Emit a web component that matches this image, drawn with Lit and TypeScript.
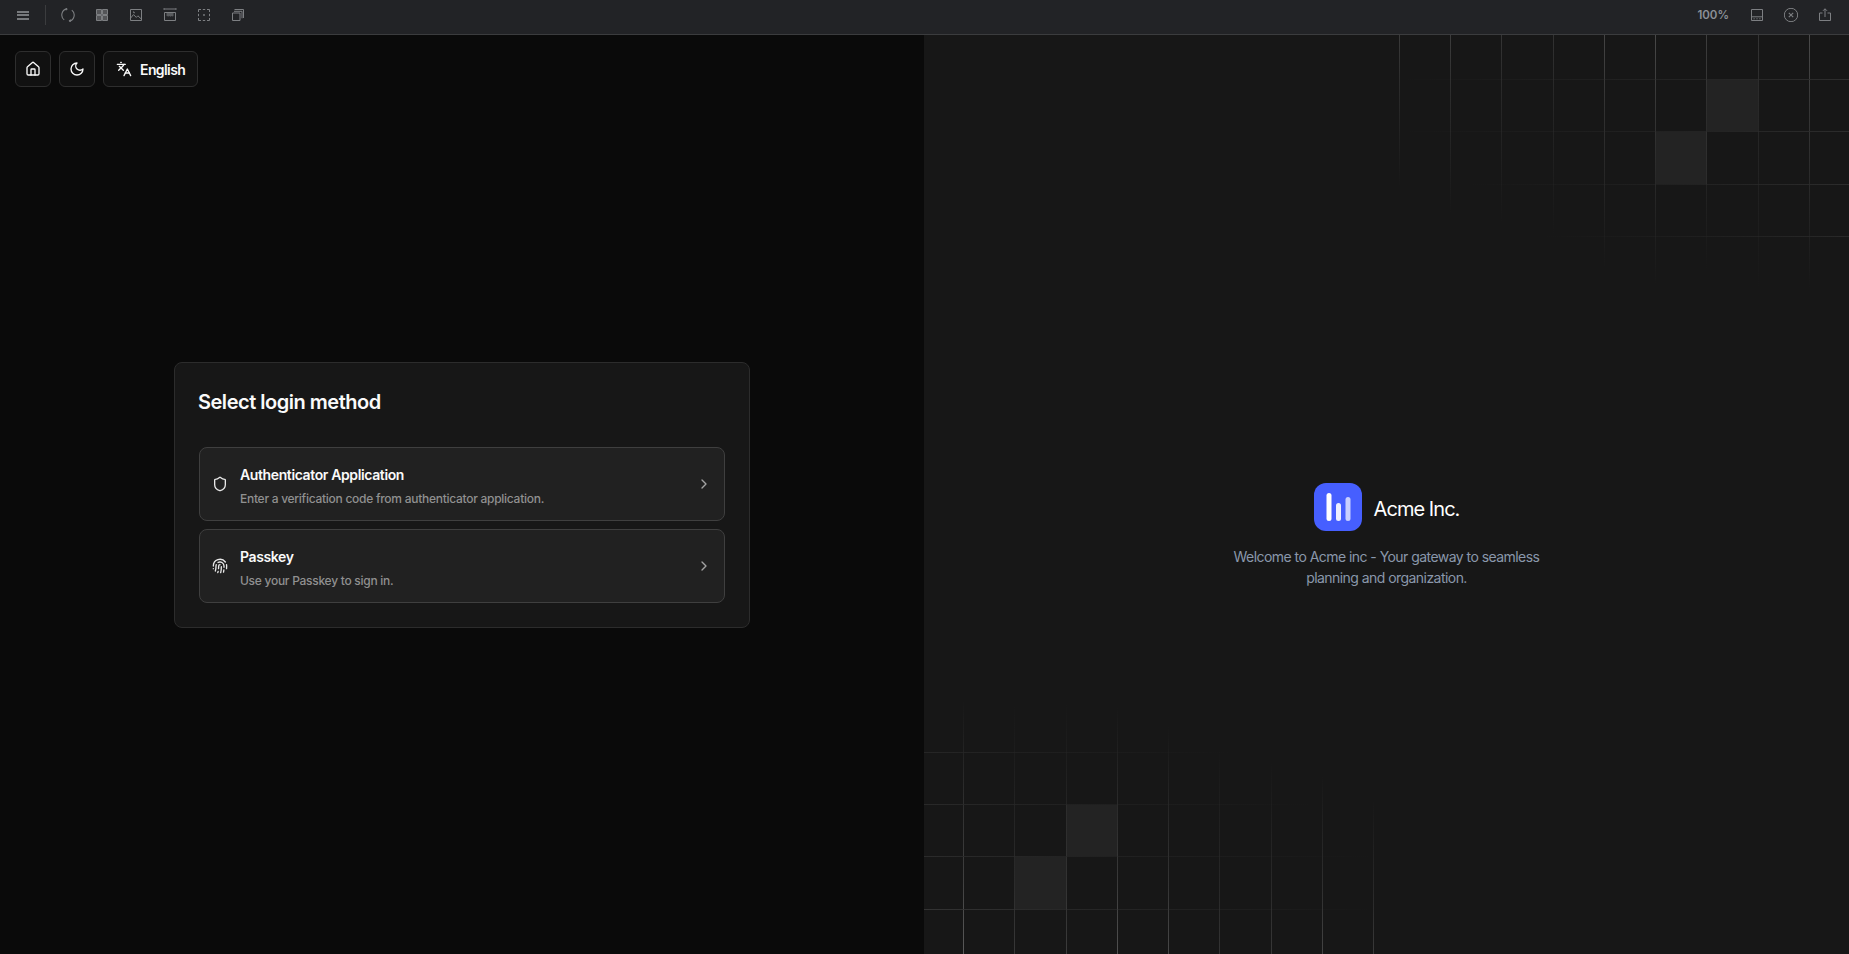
import { LitElement, html, css, svg } from "lit";
import { customElement } from "lit/decorators.js";

const lucide = (paths: string[], size = 16, sw = 2) => html`<svg
  width=${size}
  height=${size}
  viewBox="0 0 24 24"
  fill="none"
  stroke="currentColor"
  stroke-width=${sw}
  stroke-linecap="round"
  stroke-linejoin="round"
>
  ${paths.map((d) => svg`<path d=${d}></path>`)}
</svg>`;

const HOUSE = [
  "M15 21v-8a1 1 0 0 0-1-1h-4a1 1 0 0 0-1 1v8",
  "M3 10a2 2 0 0 1 .709-1.528l7-5.999a2 2 0 0 1 2.582 0l7 5.999A2 2 0 0 1 21 10v9a2 2 0 0 1-2 2H5a2 2 0 0 1-2-2z",
];
const MOON = ["M12 3a6 6 0 0 0 9 9 9 9 0 1 1-9-9Z"];
const LANG = ["m5 8 6 6", "m4 14 6-6 2-3", "M2 5h12", "M7 2h1", "m22 22-5-10-5 10", "M14 18h6"];
const SHIELD = [
  "M20 13c0 5-3.5 7.5-7.66 8.95a1 1 0 0 1-.67-.01C7.5 20.5 4 18 4 13V6a1 1 0 0 1 1-1c2 0 4.5-1.2 6.24-2.72a1.17 1.17 0 0 1 1.52 0C14.51 3.81 17 5 19 5a1 1 0 0 1 1 1z",
];
const PRINT = [
  "M12 10a2 2 0 0 0-2 2c0 1.02-.1 2.51-.26 4",
  "M14 13.12c0 2.38 0 6.38-1 8.88",
  "M17.29 21.02c.12-.6.43-2.3.5-3.02",
  "M2 12a10 10 0 0 1 18-6",
  "M2 16h.01",
  "M21.8 16c.2-2 .131-5.354 0-6",
  "M5 19.5C5.5 18 6 15 6 12a6 6 0 0 1 .34-2",
  "M8.65 22c.21-.66.45-1.32.57-2",
  "M9 6.8a6 6 0 0 1 9 5.2v2",
];
const CHEV = ["m9 18 6-6-6-6"];

const tool = (body: unknown) =>
  html`<svg class="ti" width="14" height="14" viewBox="0 0 14 14" fill="none" stroke="currentColor" stroke-width="1">${body}</svg>`;

const TOOLS_LEFT = [
  svg`<path d="M6 .9A6.2 6.2 0 0 0 3.2 11.9" stroke-width="1.1"/><path d="M8 13.1A6.2 6.2 0 0 0 10.8 2.1" stroke-width="1.1"/><path d="M4.6 .2L6.2 .9 5.2 2.4" stroke-width=".9"/><path d="M9.6 11L7.6 13l2.4 1z" fill="currentColor" stroke="none"/>`,
  svg`<path d="M1.5 1.5h5v5h-5zM7.5 1.5h5v5h-5zM1.5 7.5h5v5h-5zM7.5 7.5h5v5h-5z" fill="currentColor" fill-opacity=".55"/>`,
  svg`<path d="M1.5 1.5h11v11h-11z"/><path d="M1.5 10.2l3-3.6 2.8 2.8 1.6-1.6 3.6 3.4"/><path d="M4.2 3.6l1.4 1.6" stroke-width="1.2"/>`,
  svg`<path d="M1 1h12"/><path d="M1 .2v1.6M13 .2v1.6"/><path d="M1.5 4.5h11v8h-11z"/><path d="M3.5 5h7v3l-1 .6-1-.6-1 .8-1-.8-1 .6-2-.6z" fill="currentColor" fill-opacity=".6" stroke="none"/>`,
  svg`<path d="M1.5 4V1.5H4M5.8 1.5h2.4M10 1.5h2.5V4M12.5 5.8v2.4M12.5 10v2.5H10M8.2 12.5H5.8M4 12.5H1.5V10M1.5 8.2V5.8"/><circle cx="7" cy="7" r=".9" fill="currentColor" stroke="none"/>`,
  svg`<path d="M1.5 5h7.5v7.5H1.5z"/><path d="M3 3.3h8v7"/><path d="M3.5 1.5h9V10"/>`,
];

const TOOLS_RIGHT = [
  svg`<path d="M1.5 1.5h11v11h-11z"/><path d="M1.5 8.8h11"/><path d="M3.5 10.8h1.2M6.4 10.8h1.2M9.3 10.8h1.2"/>`,
  svg`<circle cx="7" cy="7" r="6.7"/><path d="M4.8 4.8l4.4 4.4M9.2 4.8l-4.4 4.4" stroke-width="1.1"/>`,
  svg`<path d="M4.5 5H1.5v7.5h11V5H9.5"/><path d="M7 9V.8"/><path d="M5 2.8L7 .8l2 2"/>`,
];

/* Grid decoration: x/y in page pixels, with the extent each line fades to. */
const OX = 924;
const OY = 35;
const TR_V: [number, number, string][] = [
  [1399.5, 187, "#3a3a3a"],
  [1450.5, 215, "#3c3c3c"],
  [1501.5, 222, "#343434"],
  [1553.5, 235, "#323232"],
  [1604.5, 270, "#444444"],
  [1655.5, 285, "#484848"],
  [1706.5, 270, "#3e3e3e"],
  [1758.5, 290, "#343434"],
  [1809.5, 288, "#4a4a4a"],
];
const TR_H: [number, number, string][] = [
  [79.5, 1399, "#2e2e2e"],
  [131.5, 1400, "#2c2c2c"],
  [184.5, 1470, "#2c2c2c"],
  [236.5, 1545, "#292929"],
];
const BL_V: [number, number, string][] = [
  [963.5, 700, "#5a5a5a"],
  [1014.5, 702, "#383838"],
  [1066.5, 702, "#3c3c3c"],
  [1117.5, 706, "#505050"],
  [1168.5, 725, "#484848"],
  [1219.5, 750, "#343434"],
  [1271.5, 762, "#383838"],
  [1322.5, 775, "#444444"],
  [1373.5, 800, "#3a3a3a"],
];
const BL_H: [number, number, string][] = [
  [752.5, 1230, "#262626"],
  [804.5, 1310, "#292929"],
  [856.5, 1373, "#2b2b2b"],
  [909.5, 1374, "#333333"],
];

@customElement("app-root")
export class AppRoot extends LitElement {
  static styles = css`
    :host {
      display: flex;
      flex-direction: column;
      width: 100%;
      height: 954px;
      overflow: hidden;
      font-family: Inter, "Liberation Sans", sans-serif;
      background: #0a0a0a;
      color: #fff;
    }
    .toolbar {
      flex: 0 0 35px;
      box-sizing: border-box;
      display: flex;
      align-items: center;
      justify-content: space-between;
      padding-bottom: 4px;
      background: #222326;
      border-bottom: 1px solid #3b3c3e;
      color: #7d7f82;
    }
    .tgroup {
      display: flex;
      align-items: center;
    }
    .tleft {
      padding-left: 17px;
    }
    .burger {
      width: 12px;
      height: 9px;
      margin-right: 16px;
      box-sizing: border-box;
      border-top: 2px solid #77797c;
      border-bottom: 2px solid #77797c;
      position: relative;
    }
    .burger::after {
      content: "";
      position: absolute;
      left: 0;
      right: 0;
      top: 1.5px;
      height: 2px;
      background: #77797c;
    }
    .sep {
      width: 1px;
      height: 20px;
      background: #3b3c3e;
      margin-right: 15px;
    }
    .tleft .ti {
      margin-right: 20px;
    }
    .tright {
      padding-right: 17px;
      gap: 20px;
    }
    .zoomval {
      font-size: 11.5px;
      font-weight: 600;
      color: #8b9097;
      margin-right: 1px;
    }
    .main {
      flex: 1;
      display: grid;
      grid-template-columns: 924px 1fr;
      min-height: 0;
    }
    .left {
      position: relative;
      display: flex;
      align-items: center;
      justify-content: center;
      background: #0a0a0a;
    }
    .topbtns {
      position: absolute;
      top: 16px;
      left: 15px;
      display: flex;
      gap: 8px;
    }
    .tb {
      box-sizing: border-box;
      height: 36px;
      min-width: 36px;
      display: flex;
      align-items: center;
      justify-content: center;
      gap: 8px;
      padding: 0 12px;
      background: #111111;
      border: 1px solid #2e2e2e;
      border-radius: 6px;
      font-size: 14px;
      font-weight: 600;
      letter-spacing: -0.6px;
      color: #fafafa;
    }
    .tb.icon {
      padding: 0;
    }
    .card {
      box-sizing: border-box;
      width: 576px;
      height: 266px;
      padding: 24px;
      background: #171717;
      border: 1px solid #2c2c2c;
      border-radius: 8px;
    }
    h1 {
      margin: 0 0 30px -1px;
      font-size: 20px;
      line-height: 30px;
      font-weight: 600;
      letter-spacing: -0.48px;
      color: #fafafa;
    }
    .methods {
      display: flex;
      flex-direction: column;
      gap: 8px;
    }
    .method {
      box-sizing: border-box;
      height: 74px;
      display: flex;
      align-items: center;
      gap: 12px;
      padding: 0 12px;
      background: #212121;
      border: 1px solid #3f3f3f;
      border-radius: 8px;
    }
    .mtext {
      flex: 1;
      display: flex;
      flex-direction: column;
      gap: 4px;
      padding-top: 6px;
    }
    .mtitle {
      font-size: 14px;
      line-height: 20px;
      font-weight: 600;
      letter-spacing: -0.38px;
      color: #fafafa;
    }
    .mdesc {
      font-size: 12px;
      line-height: 20px;
      font-weight: 500;
      letter-spacing: -0.27px;
      color: #909090;
    }
    .chev {
      color: #a3a3a3;
      display: flex;
    }
    .micon {
      color: #e8e8e8;
      display: flex;
    }
    .right {
      position: relative;
      display: flex;
      flex-direction: column;
      align-items: center;
      padding-top: 448px;
      background: #171717;
      overflow: hidden;
    }
    .grid {
      position: absolute;
      left: 0;
      top: 0;
      width: 100%;
      height: 100%;
      pointer-events: none;
    }
    .brand {
      display: flex;
      align-items: center;
      gap: 12px;
      position: relative;
      margin-bottom: 15px;
    }
    .logo {
      width: 48px;
      height: 48px;
      border-radius: 12px;
      background: #465fff;
      display: flex;
    }
    .bname {
      padding-top: 3px;
      font-size: 20px;
      font-weight: 400;
      letter-spacing: -0.95px;
      color: #fff;
    }
    .tag {
      position: relative;
      margin: 0;
      width: 320px;
      text-align: center;
      font-size: 14px;
      line-height: 21px;
      letter-spacing: -0.55px;
      color: #8a97ab;
    }
  `;

  /* One line with its own gradient from `c` at the start to transparent at the end. */
  private fade(id: string, x1: number, y1: number, x2: number, y2: number, c: string) {
    return svg`
      <linearGradient id=${id} gradientUnits="userSpaceOnUse" x1=${x1} y1=${y1} x2=${x2} y2=${y2}>
        <stop offset="0" stop-color=${c}/>
        <stop offset="0.3" stop-color=${c} stop-opacity=".6"/>
        <stop offset="1" stop-color=${c} stop-opacity="0"/>
      </linearGradient>
      <line x1=${x1} y1=${y1} x2=${x2} y2=${y2} stroke=${`url(#${id})`} stroke-width="1"/>
    `;
  }

  private gridSvg() {
    const W = 925;
    const H = 919;
    return svg`
      <rect x=${1707 - OX} y=${80 - OY} width="51" height="51" fill="#232323"/>
      <rect x=${1656 - OX} y=${132 - OY} width="51" height="52" fill="#232323"/>
      <rect x=${1066 - OX} y=${805 - OY} width="51" height="51" fill="#232323"/>
      <rect x=${1015 - OX} y=${857 - OY} width="52" height="52" fill="#232323"/>
      ${TR_V.map(([x, end, c], i) => this.fade(`trv${i}`, x - OX, 0, x - OX, end - OY, c))}
      ${TR_H.map(([y, start, c], i) => this.fade(`trh${i}`, W, y - OY, start - OX, y - OY, c))}
      ${BL_V.map(([x, start, c], i) => this.fade(`blv${i}`, x - OX, H, x - OX, start - OY, c))}
      ${BL_H.map(([y, end, c], i) => this.fade(`blh${i}`, 0, y - OY, end - OX, y - OY, c))}
    `;
  }

  render() {
    return html`
      <div class="toolbar">
        <div class="tgroup tleft">
          <div class="burger"></div>
          <div class="sep"></div>
          ${TOOLS_LEFT.map((t) => tool(t))}
        </div>
        <div class="tgroup tright">
          <span class="zoomval">100%</span>
          ${TOOLS_RIGHT.map((t) => tool(t))}
        </div>
      </div>
      <div class="main">
        <div class="left">
          <div class="topbtns">
            <div class="tb icon">${lucide(HOUSE)}</div>
            <div class="tb icon">${lucide(MOON)}</div>
            <div class="tb">${lucide(LANG)}<span>English</span></div>
          </div>
          <div class="card">
            <h1>Select login method</h1>
            <div class="methods">
              <div class="method">
                <span class="micon">${lucide(SHIELD)}</span>
                <div class="mtext">
                  <span class="mtitle">Authenticator Application</span>
                  <span class="mdesc">Enter a verification code from authenticator application.</span>
                </div>
                <span class="chev">${lucide(CHEV)}</span>
              </div>
              <div class="method">
                <span class="micon">${lucide(PRINT)}</span>
                <div class="mtext">
                  <span class="mtitle">Passkey</span>
                  <span class="mdesc">Use your Passkey to sign in.</span>
                </div>
                <span class="chev">${lucide(CHEV)}</span>
              </div>
            </div>
          </div>
        </div>
        <div class="right">
          <svg class="grid">${this.gridSvg()}</svg>
          <div class="brand">
            <div class="logo">
              <svg width="48" height="48" viewBox="0 0 48 48">
                <rect x="12.5" y="10" width="5" height="28" rx="2.5" fill="#fff"></rect>
                <rect x="22" y="20" width="5" height="18" rx="2.5" fill="#fff" fill-opacity=".9"></rect>
                <rect x="31.5" y="14" width="5" height="24" rx="2.5" fill="#fff" fill-opacity=".7"></rect>
              </svg>
            </div>
            <span class="bname">Acme Inc.</span>
          </div>
          <p class="tag">Welcome to Acme inc - Your gateway to seamless planning and organization.</p>
        </div>
      </div>
    `;
  }
}
